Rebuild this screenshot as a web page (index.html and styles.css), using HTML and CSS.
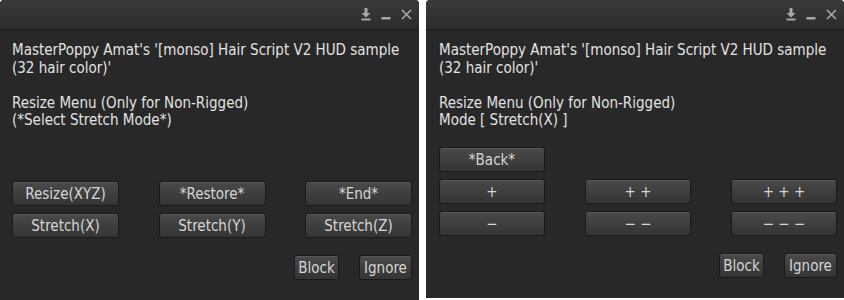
FILE: index.html
```html
<!DOCTYPE html>
<html lang="en">
<head>
  <meta charset="UTF-8">
  <title>Script Dialogs</title>
  <link rel="stylesheet" href="styles.css">
</head>
<body>
  <div class="dialog dialog-left">
    <div class="titlebar">
      <svg class="tb-icon" width="10" height="13" viewBox="0 0 10 13"><path d="M3.5 0h3v5h3l-4.5 4.5L0.5 5h3z" fill="#a8a8a8"/><rect x="0.5" y="10.5" width="9" height="2" fill="#a8a8a8"/></svg>
      <svg class="tb-icon" width="10" height="13" viewBox="0 0 10 13"><rect x="0.5" y="9" width="9" height="2.5" fill="#a8a8a8"/></svg>
      <svg class="tb-icon" width="11" height="13" viewBox="0 0 11 13"><path d="M1 2l9 9M10 2l-9 9" stroke="#a8a8a8" stroke-width="1.6"/></svg>
    </div>
    <div class="content">
      <p class="message">MasterPoppy Amat's '[monso] Hair Script V2 HUD sample (32 hair color)'<br><br>Resize Menu (Only for Non-Rigged)<br>(*Select Stretch Mode*)</p>
      <div class="buttons">
        <div class="grid">
          <button>Resize(XYZ)</button>
          <button>*Restore*</button>
          <button>*End*</button>
          <button>Stretch(X)</button>
          <button>Stretch(Y)</button>
          <button>Stretch(Z)</button>
        </div>
        <div class="actions">
          <button class="btn-block">Block</button>
          <button class="btn-ignore">Ignore</button>
        </div>
      </div>
    </div>
  </div>

  <div class="dialog dialog-right">
    <div class="titlebar">
      <svg class="tb-icon" width="10" height="13" viewBox="0 0 10 13"><path d="M3.5 0h3v5h3l-4.5 4.5L0.5 5h3z" fill="#a8a8a8"/><rect x="0.5" y="10.5" width="9" height="2" fill="#a8a8a8"/></svg>
      <svg class="tb-icon" width="10" height="13" viewBox="0 0 10 13"><rect x="0.5" y="9" width="9" height="2.5" fill="#a8a8a8"/></svg>
      <svg class="tb-icon" width="11" height="13" viewBox="0 0 11 13"><path d="M1 2l9 9M10 2l-9 9" stroke="#a8a8a8" stroke-width="1.6"/></svg>
    </div>
    <div class="content">
      <p class="message">MasterPoppy Amat's '[monso] Hair Script V2 HUD sample (32 hair color)'<br><br>Resize Menu (Only for Non-Rigged)<br>Mode [ Stretch(X) ]</p>
      <div class="buttons">
        <div class="grid">
          <button>*Back*</button>
          <span></span>
          <span></span>
          <button>+</button>
          <button>+ +</button>
          <button>+ + +</button>
          <button>&minus;</button>
          <button>&minus; &minus;</button>
          <button>&minus; &minus; &minus;</button>
        </div>
        <div class="actions">
          <button class="btn-block">Block</button>
          <button class="btn-ignore">Ignore</button>
        </div>
      </div>
    </div>
  </div>
</body>
</html>
```

FILE: styles.css
```css
body {
  margin: 0;
  background-color: #ffffff;
  font-family: 'DejaVu Sans Condensed', 'DejaVu Sans', sans-serif;
  font-stretch: condensed;
  display: flex;
  gap: 7px;
  height: 300px;
  overflow: hidden;
}
.dialog {
  background-color: #282828;
  border-radius: 4px 4px 0 0;
  display: flex;
  flex-direction: column;
  box-sizing: border-box;
}
.dialog-left {
  width: 419px;
  height: 300px;
}
.dialog-right {
  width: 418px;
  height: 298px;
}
.titlebar {
  height: 29px;
  border-bottom: 1px solid #1b1b1b;
  background: linear-gradient(#3a3a3a, #2c2c2c);
  border-radius: 4px 4px 0 0;
  display: flex;
  justify-content: flex-end;
  align-items: center;
  gap: 10px;
  padding-right: 7px;
}
.tb-icon {
  display: block;
}
.content {
  flex: 1;
  display: flex;
  flex-direction: column;
  padding: 12px 7px 20px 12px;
}
.dialog-right .content {
  padding-left: 13px;
}
.message {
  margin: 0;
  font-size: 15px;
  line-height: 17.6px;
  color: #e2e2e2;
}
.buttons {
  margin-top: auto;
  display: flex;
  flex-direction: column;
  gap: 17px;
}
.grid {
  display: grid;
  grid-template-columns: repeat(3, 107px);
  justify-content: space-between;
  row-gap: 7px;
}
.dialog-right .grid {
  grid-template-columns: repeat(3, 106px);
}
.actions {
  display: flex;
  justify-content: flex-end;
  gap: 20px;
}
button {
  height: 25px;
  padding: 0;
  border: 1px solid #1a1a1a;
  border-radius: 3px;
  background: linear-gradient(#4a4a4a, #343434);
  box-shadow: inset 0 1px 0 rgba(255, 255, 255, 0.08);
  color: #d6d6d6;
  font-family: 'DejaVu Sans Condensed', 'DejaVu Sans', sans-serif;
  font-stretch: condensed;
  font-size: 15px;
}
.btn-block {
  width: 45px;
}
.btn-ignore {
  width: 53px;
}
```
